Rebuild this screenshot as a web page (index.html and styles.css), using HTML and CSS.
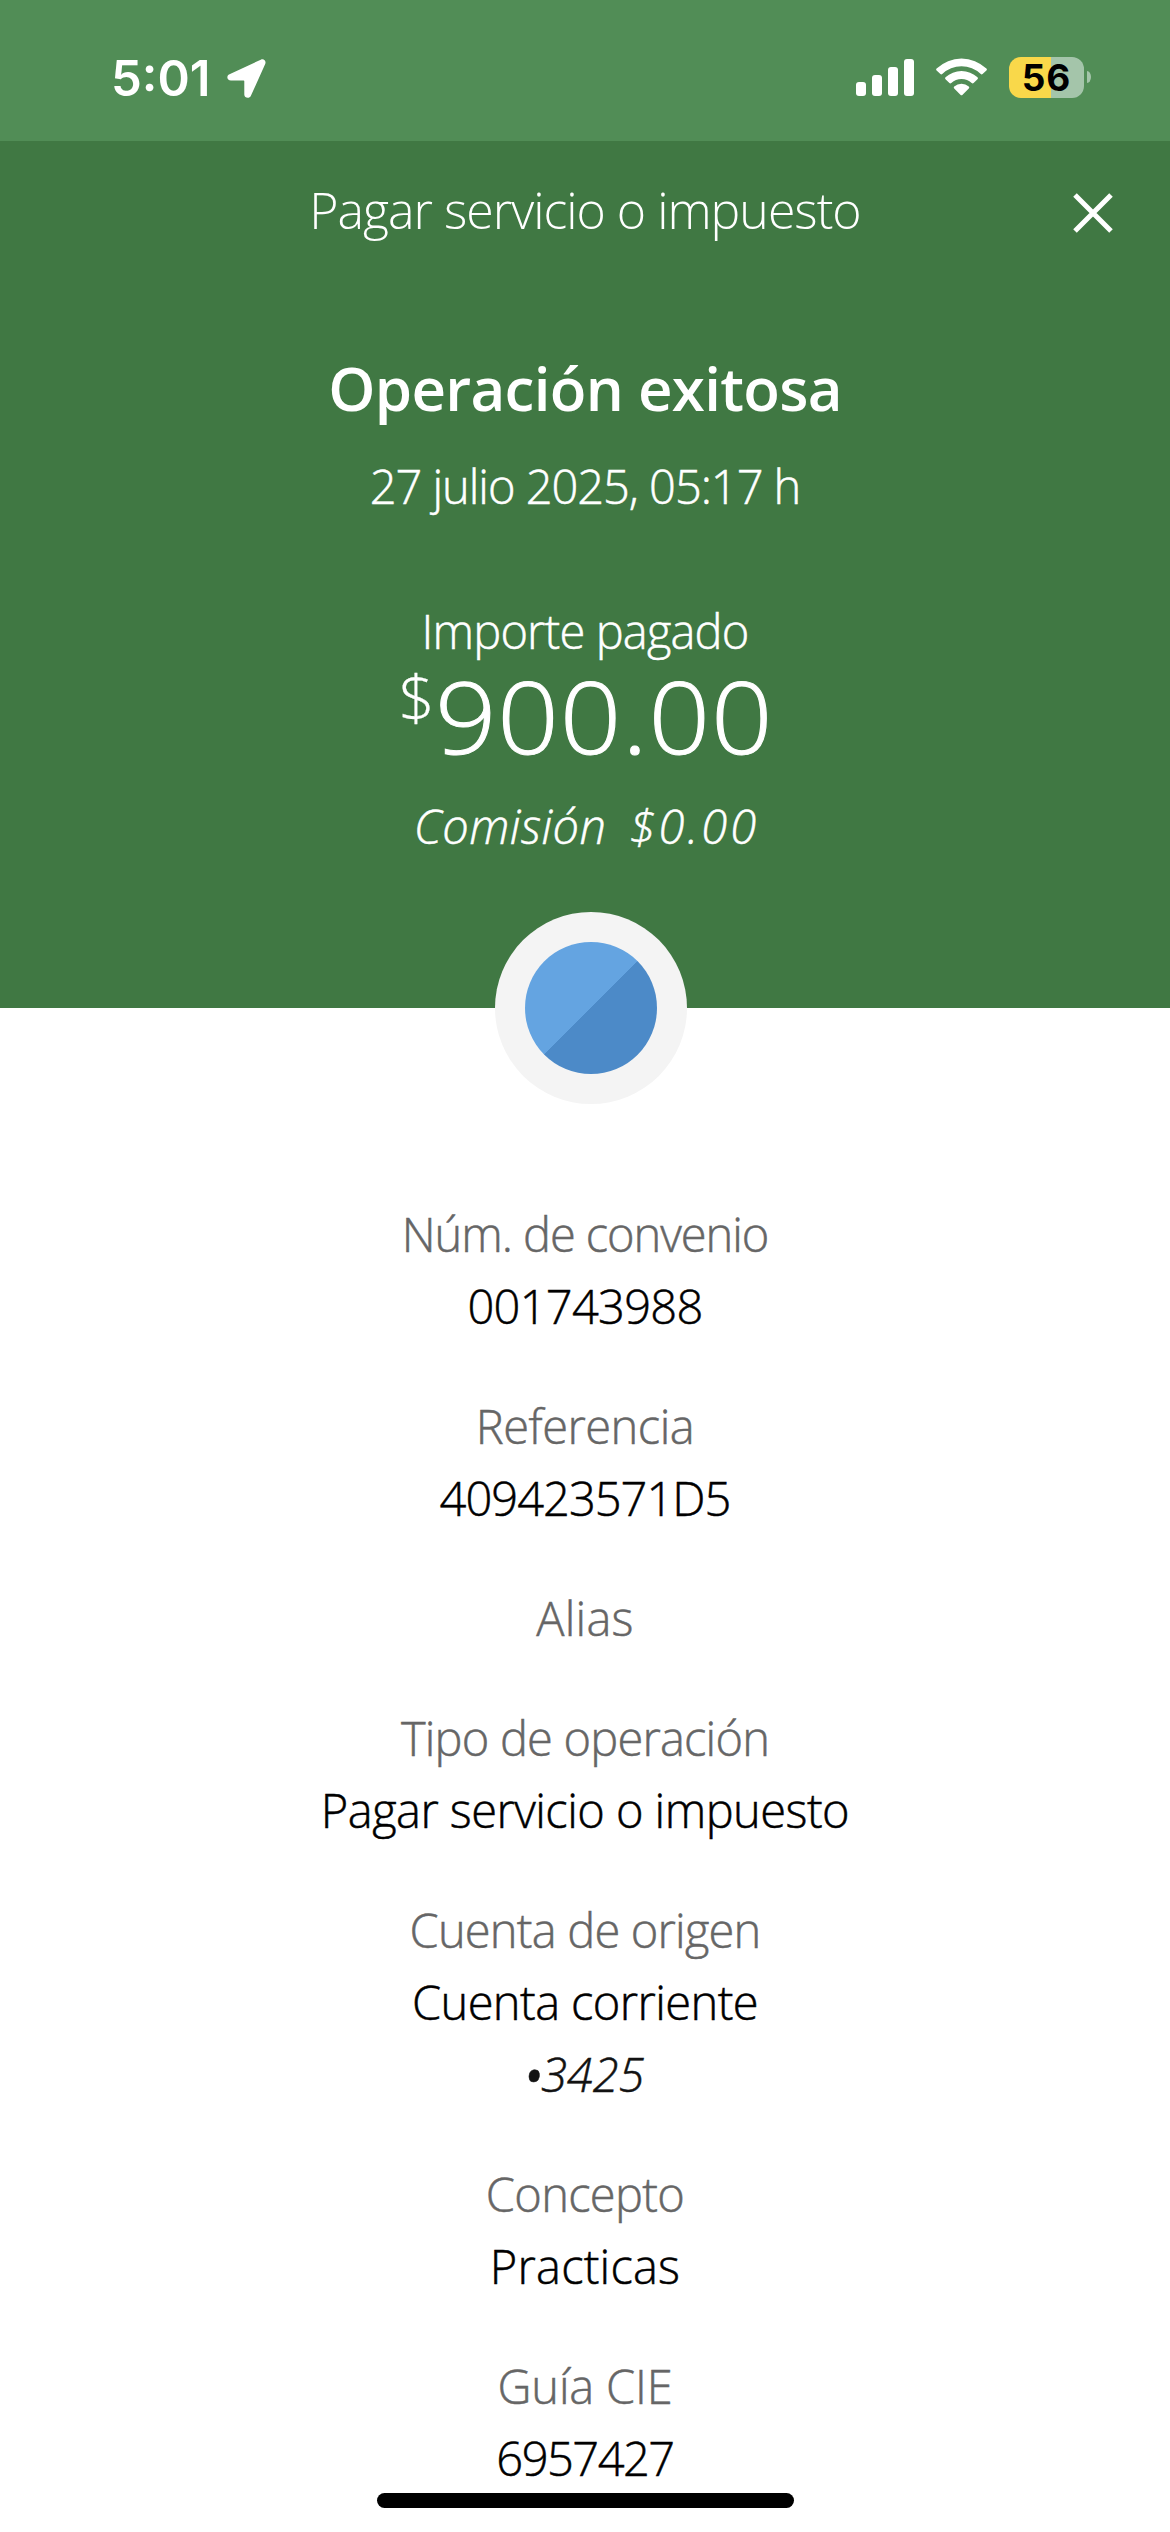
FILE: index.html
```html
<!DOCTYPE html>
<html lang="es">
<head>
<meta charset="utf-8">
<title>Pagar servicio o impuesto</title>
<link rel="stylesheet" href="styles.css">
</head>
<body>
<div class="statusbar">
  <div class="clock">
    <span class="time">5:01</span>
    <svg class="location" width="39" height="39" viewBox="0 0 39 39"><path d="M2.5 15.2 33.8.7c3-1.400 5.700 1.300 4.400 4.300L23.900 36.800c-1.500 3.300-6.600 2.400-6.600-1.300V22.300c0-.5-.2-.7-.7-.7H4C-.100 21.600-1 16.800 2.500 15.200Z" fill="#fff"/></svg>
  </div>
  <div class="indicators">
    <svg width="58" height="37" viewBox="0 0 58 37" fill="#fff"><rect y="23" width="10" height="14" rx="3"/><rect x="16" y="16" width="10" height="21" rx="3"/><rect x="32" y="8" width="10" height="29" rx="3"/><rect x="48" width="10" height="37" rx="3"/></svg>
    <svg class="wifi" width="51" height="38" viewBox="0 0 51 38" fill="#fff"><path d="M.6 10.600a36 36 0 0 1 49.800 0q1 1 0 2L46.600 16q-.9.800-1.800 0a28 28 0 0 0-38.600 0q-.9.800-1.800 0L.6 12.600q-1-1 0-2Z"/><path d="M9.500 19.300a23.500 23.500 0 0 1 32 0q1 1 0 2L37.600 25q-.9.900-1.900 0a15 15 0 0 0-20.400 0q-1 .9-1.900 0l-3.900-3.700q-1-1 0-2Z"/><path d="M18.200 28.400a11.500 11.500 0 0 1 14.600 0q1 1 0 2l-6.200 6.300q-1.100 1.100-2.200 0l-6.200-6.300q-1-1 0-2Z"/></svg>
    <div class="battery"><span class="level">56</span></div>
    <span class="nub"></span>
  </div>
</div>

<header class="hero">
  <div class="nav">
    <span class="nav-title">Pagar servicio o impuesto</span>
    <svg class="close" width="40" height="40" viewBox="0 0 40 40"><path d="M2 2 38 38M38 2 2 38" stroke="#fff" stroke-width="5"/></svg>
  </div>
  <h1 class="result">Operación exitosa</h1>
  <p class="date">27 julio 2025, 05:17 h</p>
  <p class="amount-label">Importe pagado</p>
  <div class="amount"><span class="currency">$</span><span class="figure">900.00</span></div>
  <div class="fee"><span class="fee-label">Comisión</span><span class="fee-value">$0.00</span></div>
</header>

<main class="details">
  <div class="avatar"><div class="avatar-disc"></div></div>
  <dl class="list">
    <div class="item"><dt class="w-107">Núm. de convenio</dt><dd class="w-70">001743988</dd></div>
    <div class="item"><dt class="w-50">Referencia</dt><dd class="w-96">409423571D5</dd></div>
    <div class="item"><dt class="w-0">Alias</dt></div>
    <div class="item"><dt class="w-80">Tipo de operación</dt><dd class="w-54">Pagar servicio o impuesto</dd></div>
    <div class="item"><dt class="w-80">Cuenta de origen</dt><dd class="w-58">Cuenta corriente</dd><dd class="masked"><span class="bullet">•</span>3425</dd></div>
    <div class="item"><dt class="w-70">Concepto</dt><dd class="w-0">Practicas</dd></div>
    <div class="item"><dt class="w-20">Guía CIE</dt><dd class="w-149">6957427</dd></div>
  </dl>
</main>
<div class="home-indicator"></div>
</body>
</html>
```
FILE: styles.css
```css
* { box-sizing: border-box; margin: 0; padding: 0; }

body {
  width: 1170px;
  height: 2532px;
  overflow: hidden;
  background: #fff;
  font-family: "Open Sans", "Noto Sans", sans-serif;
  font-weight: 300;
  font-size: 47px;
  line-height: 72px;
  text-align: center;
}

svg { display: block; }

.statusbar {
  display: flex;
  justify-content: space-between;
  height: 141px;
  padding: 57px 79px 0 111px;
  background: #518d56;
}

.clock { display: flex; align-items: flex-start; }
.time {
  margin-top: 1px;
  font: 600 49px/42px Inter, sans-serif;
  color: #fff;
}
.location { margin: 2px 0 0 17px; }

.indicators { display: flex; align-items: flex-start; }
.indicators svg { margin-top: 2px; }
.indicators .wifi { margin: 1px 22px 0; }

.battery {
  width: 75px;
  height: 41px;
  border-radius: 12px;
  background: linear-gradient(90deg, #f9d84a 42px, #a4c5aa 42px);
}
.level {
  display: block;
  font: 700 37px/42px Inter, sans-serif;
  letter-spacing: 1px;
  color: #000;
}
.nub {
  width: 4px;
  height: 12px;
  margin: 14px 0 0 3px;
  border-radius: 0 4px 4px 0 / 0 6px 6px 0;
  background: #a4c5aa;
}

.hero {
  height: 867px;
  padding-top: 26px;
  background: #407843;
  color: #fff;
}

.nav {
  display: grid;
  grid-template-columns: 97px 1fr 97px;
  align-items: center;
}
.nav-title {
  grid-column: 2;
  font-size: 50px;
  line-height: 86px;
  letter-spacing: -1px;
}
.close { margin-top: 6px; }

.result {
  margin-top: 95px;
  font-size: 60px;
  line-height: 80px;
  font-weight: 600;
  letter-spacing: -0.7px;
}
.date, .amount-label, .fee, .list { -webkit-text-stroke: 0.5px currentColor; }
.date { margin-top: 22px; letter-spacing: -1.03px; }
.amount-label { margin-top: 73px; letter-spacing: -0.85px; }

.amount {
  display: flex;
  justify-content: center;
  margin-top: -6px;
}
.currency {
  font-size: 63px;
  line-height: 71px;
  -webkit-text-stroke: 0.3px currentColor;
}
.figure {
  margin-right: 26px;
  font-size: 99px;
  line-height: 110px;
  letter-spacing: 0.7px;
  transform: scaleX(1.09);
  transform-origin: left;
  -webkit-text-stroke: 1px currentColor;
}

.fee {
  display: flex;
  justify-content: center;
  gap: 23px;
  margin-top: 19px;
  font-style: italic;
}
.fee-label { letter-spacing: 0.5px; }
.fee-value { margin-right: -3px; letter-spacing: 3.1px; }

.avatar {
  display: grid;
  place-items: center;
  width: 192px;
  height: 192px;
  margin: -96px 0 0 495px;
  border-radius: 50%;
  background: #f4f4f4;
}
.avatar-disc {
  width: 132px;
  height: 132px;
  border-radius: 50%;
  background: linear-gradient(135deg, #64a4e1 50%, #4c8ac8 50%);
}

.list {
  display: flex;
  flex-direction: column;
  gap: 48px;
  margin-top: 94px;
}
dt { color: #666; }
dd { color: #000; }
.masked { font-style: italic; color: #121212; }
.bullet {
  margin: 0 -5px 0 -6px;
  font-size: 70px;
  line-height: 0;
  vertical-align: -9px;
}

.w-0 { letter-spacing: 0.2px; }
.w-20 { letter-spacing: -0.2px; }
.w-50 { letter-spacing: -0.5px; }
.w-54 { letter-spacing: -0.54px; }
.w-58 { letter-spacing: -0.58px; }
.w-70 { letter-spacing: -0.7px; }
.w-80 { letter-spacing: -0.8px; }
.w-96 { letter-spacing: -0.96px; }
.w-107 { letter-spacing: -1.07px; }
.w-149 { letter-spacing: -1.49px; }

.home-indicator {
  position: absolute;
  left: 377px;
  top: 2493px;
  width: 417px;
  height: 15px;
  border-radius: 8px;
  background: #000;
}
```
